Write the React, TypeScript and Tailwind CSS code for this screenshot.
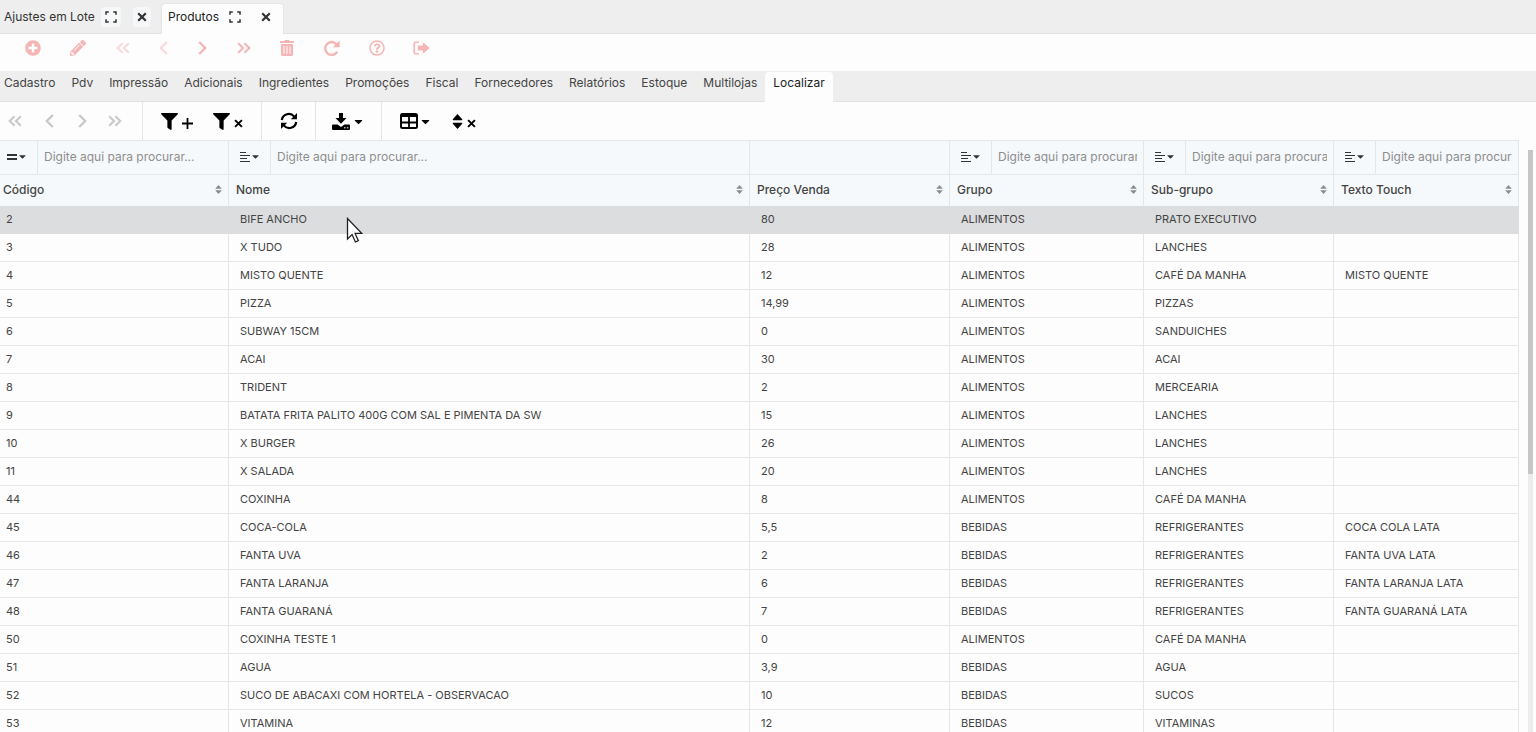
import React, { useState } from 'react';
import {
  FaCaretDown,
  FaFilter,
  FaPencilAlt,
  FaPlusCircle,
  FaRegQuestionCircle,
  FaTrashAlt,
} from 'react-icons/fa';
import clsx from 'clsx';

const menuTabs = [
  'Cadastro',
  'Pdv',
  'Impressão',
  'Adicionais',
  'Ingredientes',
  'Promoções',
  'Fiscal',
  'Fornecedores',
  'Relatórios',
  'Estoque',
  'Multilojas',
  'Localizar',
];

const columns = [
  { label: 'Código', width: 'w-[229px]', filter: 'equals' },
  { label: 'Nome', width: '', filter: 'text' },
  { label: 'Preço Venda', width: 'w-[200px]', filter: '' },
  { label: 'Grupo', width: 'w-[194px]', filter: 'text' },
  { label: 'Sub-grupo', width: 'w-[190px]', filter: 'text' },
  { label: 'Texto Touch', width: 'w-[185px]', filter: 'text' },
];

const products = [
  ['2', 'BIFE ANCHO', '80', 'ALIMENTOS', 'PRATO EXECUTIVO', ''],
  ['3', 'X TUDO', '28', 'ALIMENTOS', 'LANCHES', ''],
  ['4', 'MISTO QUENTE', '12', 'ALIMENTOS', 'CAFÉ DA MANHA', 'MISTO QUENTE'],
  ['5', 'PIZZA', '14,99', 'ALIMENTOS', 'PIZZAS', ''],
  ['6', 'SUBWAY 15CM', '0', 'ALIMENTOS', 'SANDUICHES', ''],
  ['7', 'ACAI', '30', 'ALIMENTOS', 'ACAI', ''],
  ['8', 'TRIDENT', '2', 'ALIMENTOS', 'MERCEARIA', ''],
  ['9', 'BATATA FRITA PALITO 400G COM SAL E PIMENTA DA SW', '15', 'ALIMENTOS', 'LANCHES', ''],
  ['10', 'X BURGER', '26', 'ALIMENTOS', 'LANCHES', ''],
  ['11', 'X SALADA', '20', 'ALIMENTOS', 'LANCHES', ''],
  ['44', 'COXINHA', '8', 'ALIMENTOS', 'CAFÉ DA MANHA', ''],
  ['45', 'COCA-COLA', '5,5', 'BEBIDAS', 'REFRIGERANTES', 'COCA COLA LATA'],
  ['46', 'FANTA UVA', '2', 'BEBIDAS', 'REFRIGERANTES', 'FANTA UVA LATA'],
  ['47', 'FANTA LARANJA', '6', 'BEBIDAS', 'REFRIGERANTES', 'FANTA LARANJA LATA'],
  ['48', 'FANTA GUARANÁ', '7', 'BEBIDAS', 'REFRIGERANTES', 'FANTA GUARANÁ LATA'],
  ['50', 'COXINHA TESTE 1', '0', 'ALIMENTOS', 'CAFÉ DA MANHA', ''],
  ['51', 'AGUA', '3,9', 'BEBIDAS', 'AGUA', ''],
  ['52', 'SUCO DE ABACAXI COM HORTELA - OBSERVACAO', '10', 'BEBIDAS', 'SUCOS', ''],
  ['53', 'VITAMINA', '12', 'BEBIDAS', 'VITAMINAS', ''],
];

function ExpandIcon() {
  return (
    <svg width="12" height="12" viewBox="0 0 12 12" fill="none" stroke="currentColor" strokeWidth="1.5">
      <path d="M1 3.8V1h2.800M8.200 1H11v2.800M11 8.200V11H8.200M3.800 11H1V8.200" />
    </svg>
  );
}

function ChevronIcon({ direction }: { direction: 'left' | 'right' }) {
  return (
    <svg width="9" height="14" viewBox="0 0 9 14" fill="none" stroke="currentColor" strokeWidth="2.3">
      <path d={direction === 'left' ? 'M7.800 1L1.800 7l6 6' : 'M1.200 1l6 6-6 6'} />
    </svg>
  );
}

function DoubleChevronIcon({ direction }: { direction: 'left' | 'right' }) {
  return (
    <svg width="14" height="12" viewBox="0 0 14 12" fill="none" stroke="currentColor" strokeWidth="2">
      <path
        d={
          direction === 'left'
            ? 'M6.500 1.200L1.700 6l4.800 4.800M12.800 1.200L8 6l4.800 4.800'
            : 'M1.200 1.200L6 6l-4.800 4.800M7.500 1.200L12.300 6l-4.800 4.800'
        }
      />
    </svg>
  );
}

function CrossIcon({ size = 10 }: { size?: number }) {
  return (
    <svg width={size} height={size} viewBox="0 0 10 10" fill="none" stroke="currentColor" strokeWidth="2.2">
      <path d="M1.2 1.2l7.6 7.6M8.8 1.2L1.2 8.8" />
    </svg>
  );
}

function PlusIcon() {
  return (
    <svg width="11" height="11" viewBox="0 0 11 11" fill="none" stroke="currentColor" strokeWidth="1.8">
      <path d="M5.5 0v11M0 5.5h11" />
    </svg>
  );
}

function RepeatIcon() {
  return (
    <svg width="17" height="17" viewBox="0 0 17 17">
      <path d="M13.4 4.2A6.4 6.4 0 1 0 14.2 11.6" fill="none" stroke="currentColor" strokeWidth="2.4" />
      <path d="M16.6.6v6.6H10z" fill="currentColor" />
    </svg>
  );
}

function ExitIcon() {
  return (
    <svg width="17" height="14" viewBox="0 0 17 14">
      <path d="M6 1.2H3A1.8 1.8 0 0 0 1.2 3v8A1.8 1.8 0 0 0 3 12.8h3" fill="none" stroke="currentColor" strokeWidth="1.6" />
      <path d="M4.8 4.6h5V1L16.600 7l-6.800 6V9.400h-5z" fill="currentColor" />
    </svg>
  );
}

function RefreshIcon() {
  return (
    <svg width="18" height="18" viewBox="0 0 18 18">
      <path d="M1.8 8A7 7 0 0 1 14.200 4.600M16.200 10A7 7 0 0 1 3.800 13.400" fill="none" stroke="currentColor" strokeWidth="2.2" />
      <path d="M17 1v6.200h-6.200zM1 17v-6.200h6.200z" fill="currentColor" />
    </svg>
  );
}

function ExportIcon() {
  return (
    <svg width="18" height="17" viewBox="0 0 18 17" fill="currentColor">
      <path d="M7 0h4v5h3.500L9 10.800 3.500 5H7z" />
      <path d="M1 11.500h4.600L9 14l3.400-2.500H17a1 1 0 0 1 1 1V16a1 1 0 0 1-1 1H1a1 1 0 0 1-1-1v-3.500a1 1 0 0 1 1-1z" />
      <path d="M12 14.800h1.500M14.800 14.800h1.500" stroke="#fdfdfd" strokeWidth="1" />
    </svg>
  );
}

function GridIcon() {
  return (
    <svg width="18" height="16" viewBox="0 0 18 16">
      <rect x="1" y="1" width="16" height="14" rx="1.5" fill="none" stroke="currentColor" strokeWidth="2" />
      <path d="M1 3h16M1 9.500h16M9 3v12" fill="none" stroke="currentColor" strokeWidth="1.800" />
    </svg>
  );
}

function SortToggleIcon() {
  return (
    <svg width="11" height="15" viewBox="0 0 11 15" fill="currentColor">
      <path d="M5.500 0l4.700 5.200q.4 1-.6 1H1.400q-1 0-.6-1zM5.500 15L.8 9.800q-.4-1 .6-1h8.200q1 0 .6 1z" />
    </svg>
  );
}

function EqualsIcon() {
  return (
    <svg width="10" height="10" viewBox="0 0 10 10" stroke="currentColor" strokeWidth="2">
      <path d="M0 3h10M0 7h10" />
    </svg>
  );
}

function TextLinesIcon() {
  return (
    <svg width="10" height="11" viewBox="0 0 10 11" stroke="currentColor" strokeWidth="1">
      <path d="M0 1.500h6M0 4.500h10M0 7.500h7M0 10.500h10" />
    </svg>
  );
}

function SortArrows() {
  return (
    <svg width="7" height="9" viewBox="0 0 7 9" fill="#8c8c8c">
      <path d="M3.500 0L6.800 3.700H.2zM3.500 9L.2 5.300h6.600z" />
    </svg>
  );
}

type IconButtonProps = {
  label: string;
  className?: string;
  children: React.ReactNode;
};

function IconButton({ label, className, children }: IconButtonProps) {
  return (
    <button type="button" aria-label={label} className={clsx('flex items-center justify-center', className)}>
      {children}
    </button>
  );
}

function WindowTabs() {
  return (
    <div className="flex h-[34px] shrink-0 items-end border-b border-[#e2e2e2] bg-[#eeeeee] whitespace-nowrap text-[#333]">
      <div className="flex h-[31px] w-[161px] items-center pb-0.5 pl-1">
        <a href="#ajustes" className="w-[97px]">Ajustes em Lote</a>
        <IconButton label="Expandir Ajustes em Lote" className="h-5 w-5 rounded bg-[#f6f7f8]"><ExpandIcon /></IconButton>
        <IconButton label="Fechar Ajustes em Lote" className="ml-3 h-5 w-[18px] rounded bg-[#f6f7f8]"><CrossIcon /></IconButton>
      </div>
      <div className="-mb-px flex h-[31px] w-[123px] items-center rounded-t border border-b-0 border-[#e6e6e6] bg-[#fdfdfd] pb-1 pl-1.5">
        <a href="#produtos" className="w-[57px] text-[#222]">Produtos</a>
        <IconButton label="Expandir Produtos" className="h-5 w-5"><ExpandIcon /></IconButton>
        <IconButton label="Fechar Produtos" className="ml-3 h-5 w-[18px]"><CrossIcon /></IconButton>
      </div>
    </div>
  );
}

function RecordToolbar() {
  return (
    <div className="flex h-[37px] shrink-0 items-start pt-1 pl-2.5 text-[#f6b5b5]">
      <IconButton label="Novo" className="h-5 w-[45px]"><FaPlusCircle size={16} /></IconButton>
      <IconButton label="Editar" className="h-5 w-[45px]"><FaPencilAlt size={16} /></IconButton>
      <IconButton label="Primeiro" className="h-5 w-[45px] opacity-50"><DoubleChevronIcon direction="left" /></IconButton>
      <IconButton label="Anterior" className="h-5 w-[37px] opacity-50"><ChevronIcon direction="left" /></IconButton>
      <IconButton label="Próximo" className="h-5 w-[41px]"><ChevronIcon direction="right" /></IconButton>
      <IconButton label="Último" className="h-5 w-[41px]"><DoubleChevronIcon direction="right" /></IconButton>
      <IconButton label="Excluir" className="h-5 w-[45px]"><FaTrashAlt size={16} /></IconButton>
      <IconButton label="Atualizar" className="h-5 w-[45px]"><RepeatIcon /></IconButton>
      <IconButton label="Ajuda" className="h-5 w-[45px]"><FaRegQuestionCircle size={16} /></IconButton>
      <IconButton label="Sair" className="h-5 w-[45px]"><ExitIcon /></IconButton>
    </div>
  );
}

function MenuTabs() {
  const [active, setActive] = useState('Localizar');

  return (
    <nav className="flex h-[31px] shrink-0 items-end border-b border-[#e2e2e2] bg-[#eeeeee]">
      {menuTabs.map((tab) => (
        <a
          key={tab}
          href={`#${tab}`}
          onClick={() => setActive(tab)}
          className={clsx(
            '-mb-px h-[30px] pt-[3px] leading-4',
            tab === 'Cadastro' ? 'pl-1 pr-2' : 'px-2',
            active === tab && 'rounded-t bg-[#fdfdfd] text-[#222]',
          )}
        >
          {tab}
        </a>
      ))}
    </nav>
  );
}

function GridToolbar() {
  return (
    <div className="flex h-[38px] shrink-0 text-black">
      <div className="flex w-[143px] items-center border-r border-[#e6e6e6] text-[#c8c8c8]">
        <IconButton label="Primeira página" className="w-[29px]"><DoubleChevronIcon direction="left" /></IconButton>
        <IconButton label="Página anterior" className="w-10"><ChevronIcon direction="left" /></IconButton>
        <IconButton label="Próxima página" className="w-[26px]"><ChevronIcon direction="right" /></IconButton>
        <IconButton label="Última página" className="w-10"><DoubleChevronIcon direction="right" /></IconButton>
      </div>
      <div className="flex w-[119px] items-center gap-5 border-r border-[#e6e6e6] pl-[18px]">
        <IconButton label="Adicionar filtro" className="gap-1"><FaFilter size={17} /><span className="pt-1"><PlusIcon /></span></IconButton>
        <IconButton label="Limpar filtro" className="gap-1"><FaFilter size={17} /><span className="pt-1"><CrossIcon size={9} /></span></IconButton>
      </div>
      <div className="flex w-[54px] items-center justify-center border-r border-[#e6e6e6]">
        <IconButton label="Recarregar"><RefreshIcon /></IconButton>
      </div>
      <div className="flex w-[66px] items-center justify-center border-r border-[#e6e6e6]">
        <IconButton label="Exportar" className="gap-0.5"><ExportIcon /><FaCaretDown size={13} /></IconButton>
      </div>
      <div className="flex items-center gap-5 pl-[18px]">
        <IconButton label="Colunas" className="gap-px"><GridIcon /><FaCaretDown size={13} /></IconButton>
        <IconButton label="Limpar ordenação" className="gap-1"><SortToggleIcon /><span className="pt-1"><CrossIcon size={9} /></span></IconButton>
      </div>
    </div>
  );
}

function ProductTable() {
  const [selected, setSelected] = useState('2');

  return (
    <table className="w-full table-fixed border-separate border-spacing-0">
      <colgroup>
        {columns.map((column) => (
          <col key={column.label} className={column.width} />
        ))}
      </colgroup>
      <thead className="bg-[#f6f9fb]">
        <tr>
          {columns.map((column, index) => (
            <td key={column.label} className="h-[35px] border-t border-r border-b border-[#e4e6e8] p-0">
              {column.filter && (
                <div className="flex h-full items-center">
                  <IconButton
                    label={`Tipo de filtro ${column.label}`}
                    className={clsx(
                      'h-[33px] shrink-0 border-r border-[#e4e6e8] pb-0.5 pl-0.5 text-[#333]',
                      index === 0 ? 'w-[38px] pr-1' : 'w-[42px]',
                    )}
                  >
                    {column.filter === 'equals' ? <EqualsIcon /> : <TextLinesIcon />}
                    <FaCaretDown size={11} />
                  </IconButton>
                  <input
                    type="text"
                    aria-label={`Procurar ${column.label}`}
                    placeholder="Digite aqui para procurar..."
                    className="mx-1.5 h-6 w-full min-w-0 bg-transparent pb-0.5 outline-none placeholder:text-[#8e8e8e]"
                  />
                </div>
              )}
            </td>
          ))}
        </tr>
        <tr>
          {columns.map((column, index) => (
            <th
              key={column.label}
              scope="col"
              className={clsx(
                'h-[31px] border-r border-[#e4e6e8] pt-0 pr-1.5 pb-0.5 text-left font-medium text-[#444]',
                index === 0 ? 'pl-[3px]' : 'pl-[7px]',
              )}
            >
              <div className="flex items-center justify-between">
                {column.label}
                <SortArrows />
              </div>
            </th>
          ))}
        </tr>
      </thead>
      <tbody>
        {products.map((product) => (
          <tr
            key={product[0]}
            onClick={() => setSelected(product[0])}
            className={clsx(selected === product[0] && 'bg-[#dcddde]')}
          >
            {product.map((value, index) => (
              <td
                key={columns[index].label}
                className={clsx(
                  'h-7 truncate border-r border-b py-0 text-[11px]',
                  selected === product[0] ? 'border-[#dcddde]' : 'border-[#e6e6e6]',
                  index === 0 ? 'pl-1.5' : 'pl-[11px]',
                )}
              >
                {value}
              </td>
            ))}
          </tr>
        ))}
      </tbody>
    </table>
  );
}

function App() {
  return (
    <div className="relative flex h-screen flex-col overflow-hidden bg-[#fdfdfd] font-['Inter',sans-serif] text-[12px] text-[#444]">
      <WindowTabs />
      <RecordToolbar />
      <MenuTabs />
      <GridToolbar />
      <div className="flex min-h-0 flex-1">
        <div className="min-w-0 flex-1 overflow-hidden">
          <ProductTable />
        </div>
        <div className="w-[17px] shrink-0 pt-2.5 pr-[3px] pl-[9px]">
          <div className="h-full bg-[#ececec]">
            <div className="h-[324px] bg-[#c6c6c6]" />
          </div>
        </div>
      </div>
      <svg className="absolute top-[217px] left-[346px]" width="18" height="28" viewBox="0 0 18 28">
        <path
          d="M1.500 1.500v20.500l4.600-4.400 3.300 7.400 3-1.300-3.300-7.300h6.600z"
          fill="#fff"
          stroke="#222"
          strokeWidth="1.300"
        />
      </svg>
    </div>
  );
}

export default App;
